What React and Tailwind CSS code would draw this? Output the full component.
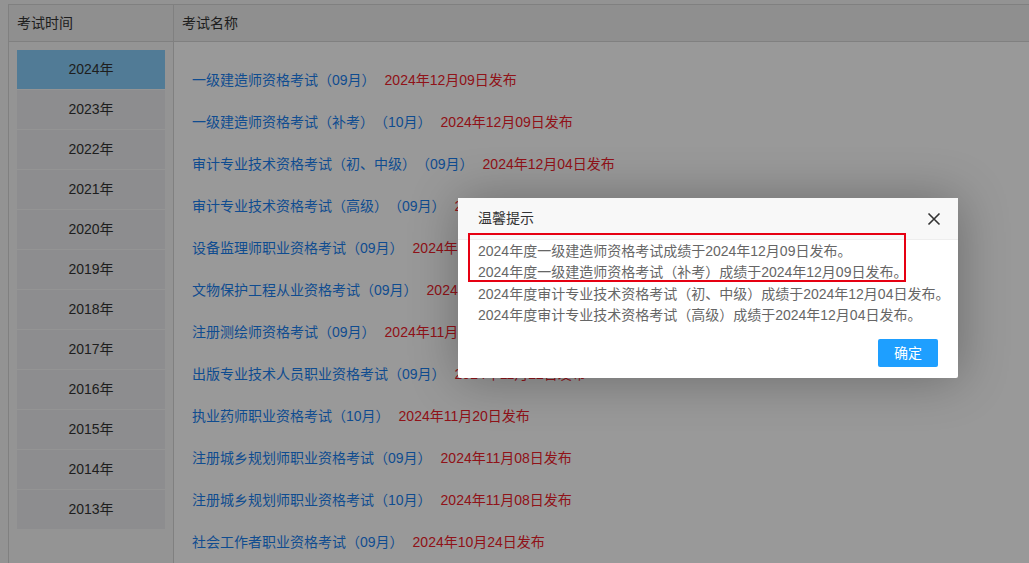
import React from "react";

const years = ["2024年","2023年","2022年","2021年","2020年","2019年","2018年","2017年","2016年","2015年","2014年","2013年"];
const exams = [
  ["一级建造师资格考试（09月）", "2024年12月09日发布"],
  ["一级建造师资格考试（补考）（10月）", "2024年12月09日发布"],
  ["审计专业技术资格考试（初、中级）（09月）", "2024年12月04日发布"],
  ["审计专业技术资格考试（高级）（09月）", "2024年12月04日发布"],
  ["设备监理师职业资格考试（09月）", "2024年11月29日发布"],
  ["文物保护工程从业资格考试（09月）", "2024年11月29日发布"],
  ["注册测绘师资格考试（09月）", "2024年11月22日发布"],
  ["出版专业技术人员职业资格考试（09月）", "2024年11月22日发布"],
  ["执业药师职业资格考试（10月）", "2024年11月20日发布"],
  ["注册城乡规划师职业资格考试（09月）", "2024年11月08日发布"],
  ["注册城乡规划师职业资格考试（10月）", "2024年11月08日发布"],
  ["社会工作者职业资格考试（09月）", "2024年10月24日发布"],
];
const lines = [
  "2024年度一级建造师资格考试成绩于2024年12月09日发布。",
  "2024年度一级建造师资格考试（补考）成绩于2024年12月09日发布。",
  "2024年度审计专业技术资格考试（初、中级）成绩于2024年12月04日发布。",
  "2024年度审计专业技术资格考试（高级）成绩于2024年12月04日发布。",
];

export default function App() {
  return (
    <div
      className="relative h-[563px] overflow-hidden bg-[#f5f5f5] pt-[4px] pl-[8px] text-[14px] [text-spacing-trim:space-all]"
      style={{ fontFamily: '"Liberation Sans", "Noto Sans CJK SC", sans-serif' }}
    >
      <div className="flex h-full flex-col border-l border-t border-[#d6d6d6] bg-white">
        <div className="flex h-[37px] shrink-0 border-b border-[#d6d6d6] bg-[#eeeeee] text-[#333]">
          <div className="flex w-[165px] items-center border-r border-[#d6d6d6] pl-[8px]">考试时间</div>
          <div className="flex items-center pl-[8px]">考试名称</div>
        </div>
        <div className="flex flex-1">
          <div className="w-[165px] border-r border-[#d6d6d6] bg-[#f7f7f7] px-[8px] pt-[8px]">
            {years.map((y, i) => (
              <div
                key={y}
                className={
                  "flex h-[40px] items-center justify-center border-b border-[#f7f7f7] text-[#333] " +
                  (i === 0 ? "bg-[#87cefa]" : "bg-[#ececee]")
                }
              >
                {y}
              </div>
            ))}
          </div>
          <div className="flex-1 pt-[17px] pl-[18px]">
            {exams.map(([name, date]) => (
              <div key={name} className="flex h-[42px] items-center">
                <span className="text-[#1a7ff0]">{name}</span>
                <span className="ml-[9px] text-[#f0202a]">{date}</span>
              </div>
            ))}
          </div>
        </div>
      </div>

      <div className="absolute inset-0 bg-black/40" />

      <div className="absolute left-[458px] top-[198px] h-[180px] w-[500px] rounded-[2px] bg-white shadow-[1px_1px_50px_rgba(0,0,0,0.3)]">
        <div className="flex h-[42px] items-center justify-between border-b border-[#eeeeee] bg-[#f8f8f8] pl-[20px] pr-[17px] text-[#333]">
          <span>温馨提示</span>
          <svg width="14" height="14" viewBox="0 0 14 14" className="text-[#333]">
            <path d="M1.5 1.5 L12.5 12.5 M12.5 1.5 L1.5 12.5" stroke="currentColor" strokeWidth="1.6" fill="none" />
          </svg>
        </div>
        <div className="px-[20px] pt-[1px] text-[#666] leading-[21.4px]">
          {lines.map((l) => (
            <div key={l} className="whitespace-nowrap">{l}</div>
          ))}
        </div>
        <div className="absolute bottom-[11px] right-[20px]">
          <button className="h-[28px] w-[60px] rounded-[2px] bg-[#1e9fff] text-[14px] text-white">确定</button>
        </div>
        <div className="pointer-events-none absolute left-[10px] top-[35px] h-[49px] w-[438px] border-2 border-[#e60012]" />
      </div>
    </div>
  );
}
